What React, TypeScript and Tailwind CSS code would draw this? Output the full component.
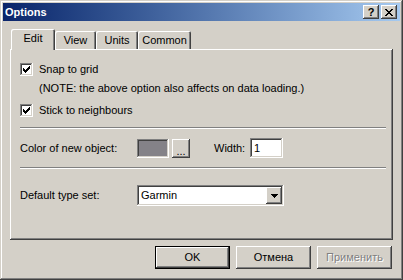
import React from "react";

// ===== CONSTANTS =====
const FONT = "font-['Liberation_Sans',Arial,sans-serif]";
const FACE = "bg-[#d4d0c8]";
const RAISED =
  "shadow-[inset_-1px_-1px_#404040,inset_1px_1px_#ffffff,inset_-2px_-2px_#808080,inset_2px_2px_#d4d0c8]";
const SUNKEN =
  "shadow-[inset_-1px_-1px_#ffffff,inset_1px_1px_#808080,inset_-2px_-2px_#d4d0c8,inset_2px_2px_#404040]";

// ===== SMALL PIECES =====
const CheckMark = () => {
  const cols = [2, 3, 4, 3, 2, 1, 0];
  return (
    <svg width="7" height="7" viewBox="0 0 7 7" shapeRendering="crispEdges">
      {cols.map((y, x) => (
        <rect key={x} x={x} y={y} width="1" height="3" fill="#000" />
      ))}
    </svg>
  );
};

const Checkbox = ({ label }: { label: string }) => (
  <div className="flex h-[13px] items-center pl-[9px]">
    <div className={`flex size-[13px] shrink-0 items-center justify-center bg-white ${SUNKEN}`}>
      <CheckMark />
    </div>
    <span className="ml-[6px] text-[11px] leading-none text-black">{label}</span>
  </div>
);

const Separator = () => (
  <div className="ml-[9px] mr-[7px] flex flex-col">
    <div className="h-px bg-[#808080]" />
    <div className="h-px bg-white" />
  </div>
);

const Tab = ({ label, active, width }: { label: string; active?: boolean; width: string }) => (
  <div
    className={`flex items-center justify-center rounded-t-[2px] ${FACE} ${width} ${
      active
        ? "h-[21px] pb-[3px] shadow-[inset_1px_1px_#ffffff,inset_-1px_0_#404040,inset_-2px_0_#808080]"
        : "mb-px h-[18px] shadow-[inset_1px_1px_#ffffff,inset_-1px_0_#404040,inset_-2px_0_#808080]"
    }`}
  >
    <span className="text-[11px] leading-none text-black">{label}</span>
  </div>
);

const DialogButton = ({
  label,
  isDefault,
  disabled,
}: {
  label: string;
  isDefault?: boolean;
  disabled?: boolean;
}) => (
  <div
    className={`flex h-[23px] w-[75px] items-center justify-center ${FACE} ${
      isDefault
        ? "shadow-[inset_0_0_0_1px_#000000,inset_-2px_-2px_#404040,inset_2px_2px_#ffffff,inset_-3px_-3px_#808080]"
        : RAISED
    }`}
  >
    <span
      className={`text-[11px] leading-none ${
        disabled ? "text-[#808080] [text-shadow:1px_1px_0_#ffffff]" : "text-black"
      }`}
    >
      {label}
    </span>
  </div>
);

const CaptionButton = ({ children }: { children: React.ReactNode }) => (
  <div className={`flex h-[14px] w-[16px] items-center justify-center ${FACE} ${RAISED}`}>
    {children}
  </div>
);

// ===== MAIN COMPONENT =====
export default function App() {
  return (
    <div className={`h-[280px] w-[403px] ${FACE} ${FONT}`}>
      <div
        className={`flex h-full w-full flex-col p-[3px] shadow-[inset_-1px_-1px_#404040,inset_1px_1px_#d4d0c8,inset_-2px_-2px_#808080,inset_2px_2px_#ffffff]`}
      >
        {/* Title bar */}
        <div className="flex h-[18px] shrink-0 items-center justify-between bg-linear-to-r from-[#0a246a] to-[#a6caf0] pl-[2px] pr-[3px]">
          <span className="text-[11px] font-bold leading-none text-white">Options</span>
          <div className="flex gap-[2px]">
            <CaptionButton>
              <span className="text-[11px] font-bold leading-none text-black">?</span>
            </CaptionButton>
            <CaptionButton>
              <svg width="8" height="7" viewBox="0 0 8 7" shapeRendering="crispEdges">
                <path d="M0 0h2v1h-2zM6 0h2v1h-2zM1 1h2v1h-2zM5 1h2v1h-2zM2 2h4v1h-4zM3 3h2v1h-2zM2 4h4v1h-4zM1 5h2v1h-2zM5 5h2v1h-2zM0 6h2v1h-2zM6 6h2v1h-2z" fill="#000" />
              </svg>
            </CaptionButton>
          </div>
        </div>

        {/* Body */}
        <div className="flex flex-1 flex-col px-[7px] pb-[8px] pt-[8px]">
          {/* Tabs */}
          <div className="relative z-10 -mb-px flex h-[21px] items-end pl-px">
            <Tab label="Edit" active width="w-[44px]" />
            <Tab label="View" width="w-[41px]" />
            <Tab label="Units" width="w-[42px]" />
            <Tab label="Common" width="w-[53px]" />
          </div>

          {/* Tab panel */}
          <div className="flex h-[191px] flex-col pl-px pt-[14px] shadow-[inset_-1px_-1px_#404040,inset_1px_1px_#ffffff,inset_-2px_-2px_#808080]">
            <Checkbox label="Snap to grid" />
            <div className="mt-[6px] flex h-[13px] items-center pl-[28px]">
              <span className="text-[11px] leading-none text-black">
                (NOTE: the above option also affects on data loading.)
              </span>
            </div>
            <div className="mt-[9px]">
              <Checkbox label="Stick to neighbours" />
            </div>

            <div className="mt-[10px]">
              <Separator />
            </div>

            {/* Color row */}
            <div className="mt-[9px] flex h-[20px] items-center pl-[9px]">
              <span className="w-[117px] text-[11px] leading-none text-black">
                Color of new object:
              </span>
              <div className={`h-[19px] w-[32px] bg-[#848288] ${SUNKEN}`} />
              <div
                className={`ml-[3px] flex h-[19px] w-[18px] items-end justify-center pb-[4px] ${FACE} ${RAISED}`}
              >
                <span className="text-[11px] leading-[6px] text-black">...</span>
              </div>
              <span className="ml-[24px] w-[36px] text-[11px] leading-none text-black">Width:</span>
              <div className={`flex h-[20px] w-[33px] items-center bg-white pl-[4px] ${SUNKEN}`}>
                <span className="text-[11px] leading-none text-black">1</span>
              </div>
            </div>

            <div className="mt-[9px]">
              <Separator />
            </div>

            {/* Default type set */}
            <div className="mt-[16px] flex h-[21px] items-center pl-[9px]">
              <span className="w-[117px] text-[11px] leading-none text-black">Default type set:</span>
              <div
                className={`flex h-[21px] w-[147px] items-center justify-between bg-white pl-[4px] pr-[2px] ${SUNKEN}`}
              >
                <span className="text-[11px] leading-none text-black">Garmin</span>
                <div className={`flex h-[17px] w-[16px] items-center justify-center ${FACE} ${RAISED}`}>
                  <svg width="7" height="4" viewBox="0 0 7 4" shapeRendering="crispEdges">
                    <path d="M0 0h7v1h-7zM1 1h5v1h-5zM2 2h3v1h-3zM3 3h1v1h-1z" fill="#000" />
                  </svg>
                </div>
              </div>
            </div>
          </div>

          {/* Dialog buttons */}
          <div className="mt-[6px] flex justify-end gap-[6px] pr-px">
            <DialogButton label="OK" isDefault />
            <DialogButton label="Отмена" />
            <DialogButton label="Применить" disabled />
          </div>
        </div>
      </div>
    </div>
  );
}
